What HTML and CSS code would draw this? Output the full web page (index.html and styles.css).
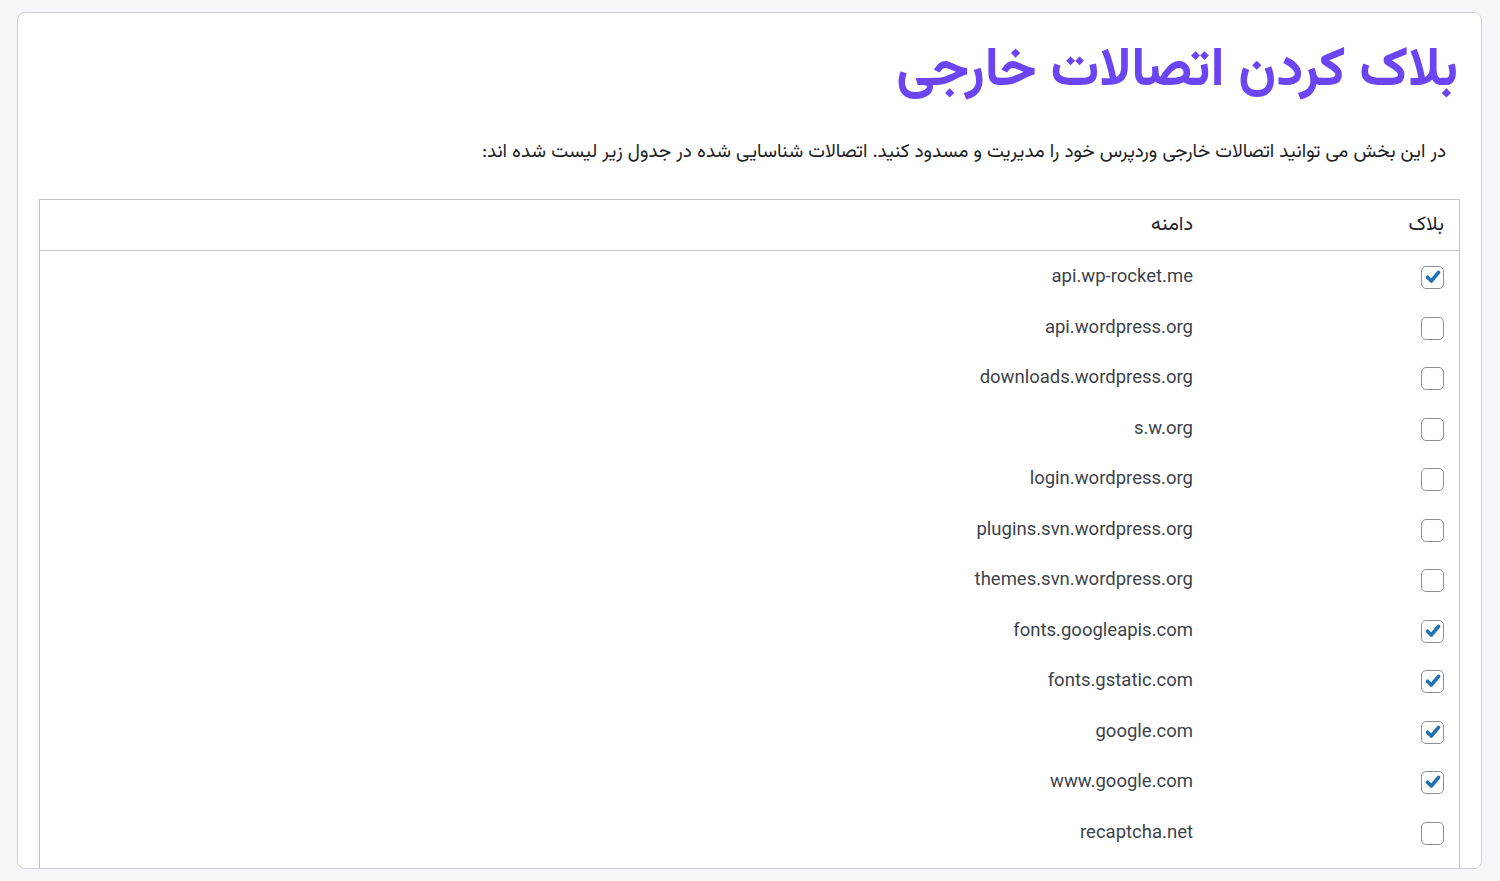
FILE: index.html
```html
<!DOCTYPE html>
<html lang="fa" dir="rtl">
<head>
<meta charset="utf-8">
<title>بلاک کردن اتصالات خارجی</title>
<link rel="stylesheet" href="styles.css">
</head>
<body>
<div class="page">
  <div class="card">
    <h1 class="title">بلاک کردن اتصالات خارجی</h1>
    <p class="desc">در این بخش می توانید اتصالات خارجی وردپرس خود را مدیریت و مسدود کنید. اتصالات شناسایی شده در جدول زیر لیست شده اند:</p>
    <table class="conn">
      <thead>
        <tr><th class="c-check">بلاک</th><th class="c-domain">دامنه</th></tr>
      </thead>
      <tbody>
        <tr><td class="c-check"><span class="cb on"><svg viewBox="0 0 20 20"><path d="M4.5 10.2 L8.3 14 L15.6 5.4" /></svg></span></td><td class="c-domain">api.wp-rocket.me</td></tr>
        <tr><td class="c-check"><span class="cb"></span></td><td class="c-domain">api.wordpress.org</td></tr>
        <tr><td class="c-check"><span class="cb"></span></td><td class="c-domain">downloads.wordpress.org</td></tr>
        <tr><td class="c-check"><span class="cb"></span></td><td class="c-domain">s.w.org</td></tr>
        <tr><td class="c-check"><span class="cb"></span></td><td class="c-domain">login.wordpress.org</td></tr>
        <tr><td class="c-check"><span class="cb"></span></td><td class="c-domain">plugins.svn.wordpress.org</td></tr>
        <tr><td class="c-check"><span class="cb"></span></td><td class="c-domain">themes.svn.wordpress.org</td></tr>
        <tr><td class="c-check"><span class="cb on"><svg viewBox="0 0 20 20"><path d="M4.5 10.2 L8.3 14 L15.6 5.4" /></svg></span></td><td class="c-domain">fonts.googleapis.com</td></tr>
        <tr><td class="c-check"><span class="cb on"><svg viewBox="0 0 20 20"><path d="M4.5 10.2 L8.3 14 L15.6 5.4" /></svg></span></td><td class="c-domain">fonts.gstatic.com</td></tr>
        <tr><td class="c-check"><span class="cb on"><svg viewBox="0 0 20 20"><path d="M4.5 10.2 L8.3 14 L15.6 5.4" /></svg></span></td><td class="c-domain">google.com</td></tr>
        <tr><td class="c-check"><span class="cb on"><svg viewBox="0 0 20 20"><path d="M4.5 10.2 L8.3 14 L15.6 5.4" /></svg></span></td><td class="c-domain">www.google.com</td></tr>
        <tr><td class="c-check"><span class="cb"></span></td><td class="c-domain">recaptcha.net</td></tr>
        <tr class="spacer"><td class="c-check"></td><td class="c-domain"></td></tr>
      </tbody>
    </table>
  </div>
</div>
</body>
</html>
```

FILE: styles.css
```css
html, body {
  margin: 0;
  padding: 0;
  background: #f5f6fa;
}
body {
  font-family: "Vazirmatn", "Noto Sans Arabic", "DejaVu Sans", sans-serif;
  color: #1d2327;
}
.page {
  height: 881px;
  padding: 12px 18px 0 17px;
  box-sizing: border-box;
}
.card {
  height: 857px;
  box-sizing: border-box;
  background: #fff;
  border: 1px solid #d2d3d6;
  border-radius: 8px;
  overflow: hidden;
  padding: 0 21px 0 21px;
}
.title {
  margin: 0;
  padding: 27px 2px 0 0;
  height: 91px;
  font-size: 54.5px;
  line-height: 64px;
  font-weight: 700;
  color: #6b45f2;
  text-align: right;
}
.desc {
  margin: 0;
  padding: 9px 14px 0 0;
  height: 59px;
  font-size: 19px;
  line-height: 26px;
  color: #1d2327;
}
.conn {
  width: 100%;
  border-collapse: collapse;
  table-layout: fixed;
  border: 1px solid #c3c4c7;
}
.conn thead th {
  height: 50px;
  font-weight: 400;
  font-size: 20px;
  text-align: right;
  border-bottom: 1px solid #c3c4c7;
  padding: 0;
  vertical-align: middle;
}
.conn .c-check {
  width: 251px;
  padding: 0 15px 0 0;
}
.conn .c-domain {
  padding: 0;
  text-align: right;
}
.conn tbody td {
  height: 50.5px;
  vertical-align: middle;
  font-family: Roboto, "Liberation Sans", sans-serif;
  font-size: 18.5px;
  color: #3c434a;
}
.cb {
  display: block;
  width: 23px;
  height: 23px;
  box-sizing: border-box;
  border: 1.5px solid #8c8f94;
  border-radius: 5px;
  background: #fff;
  margin-top: 3px;
}
.cb svg {
  display: block;
  width: 20px;
  height: 20px;
  fill: none;
  stroke: #2271b1;
  stroke-width: 3.6;
  stroke-linecap: round;
  stroke-linejoin: round;
}
.conn tbody tr.spacer td {
  height: 60px;
}
```
